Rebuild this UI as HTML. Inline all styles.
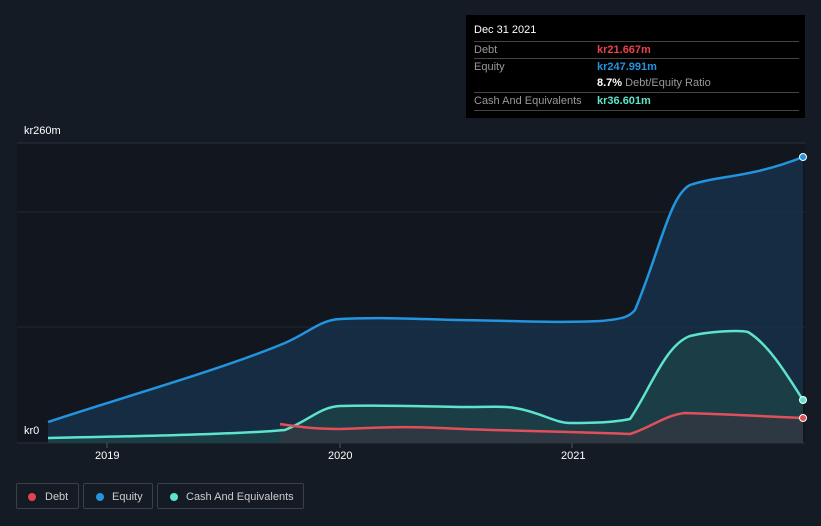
<!DOCTYPE html>
<html><head><style>
body{margin:0;width:821px;height:526px;background:#151b24;font-family:"Liberation Sans",sans-serif;overflow:hidden;position:relative}
.t{position:absolute;color:#fff;font-size:11px}
.tip{position:absolute;left:466px;top:15px;width:339px;height:103px;background:#000;font-size:11px;color:#999}
.row{position:absolute;left:8px;right:6px;border-top:1px solid #444;height:17px}
.row span{position:absolute;top:2px}
.leg{position:absolute;top:483px;height:26px;border:1px solid #3a404a;border-radius:2px;color:#ccc;font-size:11px;line-height:26px;box-sizing:border-box}
.dot{position:absolute;top:9px;width:8px;height:8px;border-radius:50%}
</style></head><body>
<svg width="821" height="526" style="position:absolute;left:0;top:0">
<rect x="17" y="143" width="788" height="300" fill="#11161f"/>
<line x1="17" y1="143" x2="805" y2="143" stroke="#2a303a"/>
<line x1="17" y1="212" x2="805" y2="212" stroke="#222832"/>
<line x1="17" y1="327" x2="805" y2="327" stroke="#222832"/>
<line x1="17" y1="443" x2="805" y2="443" stroke="#2a303a"/>
<line x1="107" y1="443" x2="107" y2="448" stroke="#555"/>
<line x1="340" y1="443" x2="340" y2="448" stroke="#555"/>
<line x1="572" y1="443" x2="572" y2="448" stroke="#555"/>
<path d="M48 422 C120 398 220 370 285 343 C310 332 320 320 340 319 C380 317 420 319 460 320 C520 321 560 323 600 321 C625 319 630 316 635 310 C660 250 670 195 690 185 C720 175 750 178 803 157 L803 443 L48 443Z" fill="#173049" opacity="0.85"/>
<path d="M48 438 C150 436 240 434 285 430 C310 420 320 407 340 406 C380 405 420 406 460 407 C490 407 505 406 515 408 C540 412 555 423 570 423 C600 423 615 422 630 419 C650 390 665 345 690 336 C710 331 740 330 748 332 C770 345 790 380 803 400 L803 443 L48 443Z" fill="#1e4a4a" opacity="0.6"/>
<path d="M280 424 C300 427 315 429 340 429 C370 428 400 426 440 428 C500 431 560 431 630 434 C650 428 665 415 685 413 C720 414 760 416 803 418 L803 443 L280 443Z" fill="#3a3640" opacity="0.6"/>
<path d="M48 422 C120 398 220 370 285 343 C310 332 320 320 340 319 C380 317 420 319 460 320 C520 321 560 323 600 321 C625 319 630 316 635 310 C660 250 670 195 690 185 C720 175 750 178 803 157" fill="none" stroke="#2394df" stroke-width="2.5"/>
<path d="M48 438 C150 436 240 434 285 430 C310 420 320 407 340 406 C380 405 420 406 460 407 C490 407 505 406 515 408 C540 412 555 423 570 423 C600 423 615 422 630 419 C650 390 665 345 690 336 C710 331 740 330 748 332 C770 345 790 380 803 400" fill="none" stroke="#5ee4cc" stroke-width="2.5"/>
<path d="M280 424 C300 427 315 429 340 429 C370 428 400 426 440 428 C500 431 560 431 630 434 C650 428 665 415 685 413 C720 414 760 416 803 418" fill="none" stroke="#e0505a" stroke-width="2.5"/>
<circle cx="803" cy="157" r="3.5" fill="#2394df" stroke="#fff"/>
<circle cx="803" cy="400" r="3.5" fill="#5ee4cc" stroke="#fff"/>
<circle cx="803" cy="418" r="3.5" fill="#e0505a" stroke="#fff"/>
</svg>
<div class="t" style="left:24px;top:125px">kr260m</div>
<div class="t" style="left:24px;top:425px">kr0</div>
<div class="t" style="left:95px;top:450px">2019</div>
<div class="t" style="left:328px;top:450px">2020</div>
<div class="t" style="left:561px;top:450px">2021</div>
<div class="tip">
<div style="position:absolute;left:8px;top:9px;color:#fff">Dec 31 2021</div>
<div class="row" style="top:26px"><span>Debt</span><span style="left:123px;color:#e8434b;font-weight:bold">kr21.667m</span></div>
<div class="row" style="top:43px"><span>Equity</span><span style="left:123px;color:#2394df;font-weight:bold">kr247.991m</span></div>
<div class="row" style="top:60px;border:none"><span style="left:123px"><b style="color:#fff">8.7%</b> Debt/Equity Ratio</span></div>
<div class="row" style="top:77px;border-bottom:1px solid #444"><span>Cash And Equivalents</span><span style="left:123px;color:#5ee4cc;font-weight:bold">kr36.601m</span></div>
</div>
<div class="leg" style="left:16px;width:63px"><div class="dot" style="left:11px;background:#e8434b"></div><span style="position:absolute;left:28px">Debt</span></div>
<div class="leg" style="left:83px;width:70px"><div class="dot" style="left:12px;background:#2394df"></div><span style="position:absolute;left:28px">Equity</span></div>
<div class="leg" style="left:157px;width:147px"><div class="dot" style="left:12px;background:#5ee4cc"></div><span style="position:absolute;left:28px">Cash And Equivalents</span></div>
</body></html>
